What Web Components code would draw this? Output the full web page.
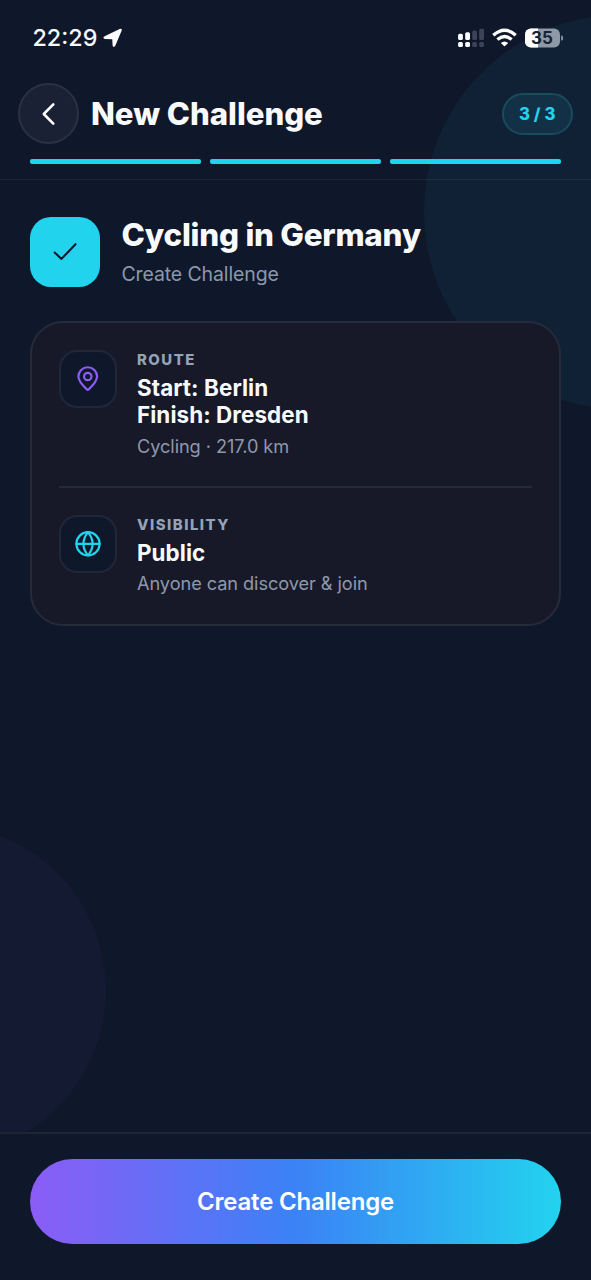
<!DOCTYPE html>
<html lang="en">
<head>
<meta charset="utf-8">
<title>New Challenge</title>
<style>
html,body{margin:0;height:100%;background:#0f172a}
body{font-family:Inter,"Liberation Sans",sans-serif;color:#f8fafc;overflow:hidden}
</style>
</head>
<body>
<challenge-screen>
  <status-bar slot="top"></status-bar>
  <screen-header slot="top" step="3 / 3">New Challenge</screen-header>
  <challenge-hero>
    <span slot="title">Cycling in Germany</span>
    <span slot="sub">Create Challenge</span>
  </challenge-hero>
  <summary-card>
    <summary-row icon="pin">
      <span slot="label">ROUTE</span>
      <span slot="value">Start: Berlin<br>Finish: Dresden</span>
      <span slot="note">Cycling · 217.0 km</span>
    </summary-row>
    <summary-row icon="globe" divided>
      <span slot="label">VISIBILITY</span>
      <span slot="value">Public</span>
      <span slot="note">Anyone can discover &amp; join</span>
    </summary-row>
  </summary-card>
  <gradient-button slot="footer">Create Challenge</gradient-button>
</challenge-screen>
<script>
const define = (name, html) => customElements.define(name, class extends HTMLElement {
  constructor() {
    super();
    this.attachShadow({ mode: "open" }).innerHTML = typeof html === "function" ? html(this) : html;
  }
});

define("challenge-screen", `
<style>
:host{display:flex;flex-direction:column;position:relative;height:1280px;width:591px;overflow:hidden;background:#0f172a;isolation:isolate}
.orb{position:absolute;border-radius:50%;z-index:-1}
.a{left:424px;top:15px;width:394px;height:394px;background:rgba(34,211,238,.06)}
.b{left:-227px;top:824px;width:333px;height:333px;background:#151a33}
main{flex:1;padding:37px 30px 0}
footer{box-sizing:border-box;height:148px;padding:25px 30px 0;border-top:2px solid #1c2536;background:#0f172a}
</style>
<div class="orb a"></div><div class="orb b"></div>
<slot name="top"></slot>
<main><slot></slot></main>
<footer><slot name="footer"></slot></footer>`);

define("status-bar", `
<style>
:host{display:flex;height:75px;flex:none;align-items:center;justify-content:space-between;padding:0 28px 0 32.5px;box-sizing:border-box}
div{display:flex;align-items:center}
.time{font-size:23.3px;font-weight:500;letter-spacing:0;line-height:28px;gap:6px}
svg{display:block}
.bat{position:relative;width:38px;height:20px}
.bat span{position:absolute;left:0;top:0;width:34px;text-align:center;font-size:17px;line-height:20px;font-weight:700;color:#172238}
</style>
<div class="time"><span>22:29</span>
<svg width="20" height="20" viewBox="0 0 20 20"><path d="M1.2 8.6 16.6 1.1Q19.4.1 18.6 2.8L12.4 17.6Q10.7 20.4 9.6 17.4L9.3 11.2 2 10.9Q-.6 10 1.2 8.6Z" fill="#fff"/></svg></div>
<div>
<svg width="27" height="20" viewBox="0 0 27 20" fill="#fff"><rect x=".1" y="5.8" width="4.8" height="6.2" rx="1.6"/><rect x="7.2" y="4.2" width="4.8" height="7.8" rx="1.6"/><rect x=".1" y="14" width="4.8" height="5" rx="1.6"/><rect x="7.2" y="14" width="4.8" height="5" rx="1.6"/><g fill="#3c4357"><rect x="14.2" y="2.5" width="4.8" height="9.5" rx="1.5"/><rect x="21.2" y=".7" width="4.8" height="11.3" rx="1.5"/><rect x="14.2" y="14" width="4.8" height="5" rx="1.5"/><rect x="21.2" y="14" width="4.8" height="5" rx="1.5"/></g></svg>
<svg style="margin:0 8px 0 7px" width="25" height="20" viewBox="0 0 25 20" fill="none" stroke="#fff" stroke-width="3.3"><path d="M1.3 7.3Q12.5-2.9 23.7 7.3"/><path d="M5.4 11.6Q12.5 5.3 19.6 11.6"/><path d="M12.5 18.6 8.8 15Q12.5 11.9 16.2 15Z" fill="#fff" stroke="none"/></svg>
<div class="bat"><svg width="38" height="20" viewBox="0 0 38 20"><defs><clipPath id="c"><rect y=".5" width="35" height="19" rx="6"/></clipPath></defs><g clip-path="url(#c)"><rect width="35" height="20" fill="#8f98a5"/><rect width="13" height="20" fill="#fff"/></g><path d="M36.2 7.2Q38.4 8 38.4 10T36.2 12.8Z" fill="#8f98a5"/></svg><span>35</span></div>
</div>`);

define("screen-header", el => `
<style>
:host{display:block;flex:none;height:105px;box-sizing:border-box;padding-top:8px;border-bottom:1.5px solid rgba(255,255,255,.06)}
.row{display:flex;align-items:center;padding:0 18px;height:61px}
.back{width:61px;height:61px;box-sizing:border-box;border:2px solid #2b3145;border-radius:50%;background:#1b2134;display:grid;place-items:center}
h1{margin:0 0 0 12px;flex:1;font-size:31.2px;font-weight:800;letter-spacing:-.03px;line-height:40px;white-space:nowrap}
.step{box-sizing:border-box;width:71.5px;height:42px;border-radius:21px;border:2px solid #194b5b;background:#123147;color:#22d3ee;font-size:16.7px;font-weight:800;line-height:39px;text-align:center;letter-spacing:.15px}
.bars{display:grid;grid-template-columns:repeat(3,1fr);gap:9px;padding:14.5px 30px 0}
.bars i{height:5px;border-radius:2px;background:#22d3ee}
</style>
<div class="row"><div class="back"><svg width="24" height="24" viewBox="0 0 24 24" fill="none" stroke="#fff" stroke-width="2.6" stroke-linecap="round" stroke-linejoin="round"><path d="M16.3 2.4 6.8 12l9.5 9.6"/></svg></div>
<h1><slot></slot></h1><div class="step">${el.getAttribute("step")}</div></div>
<div class="bars"><i></i><i></i><i></i></div>`);

define("challenge-hero", `
<style>
:host{display:flex;gap:21.5px;height:69.5px}
.tile{width:70px;height:69.5px;border-radius:21px;background:#22d3ee;display:grid;place-items:center}
.t{margin-top:-1px;font-size:31.4px;font-weight:800;letter-spacing:-.24px;line-height:38px;white-space:nowrap}
.s{margin-top:8px;font-size:19.5px;line-height:25px;color:#8d97aa;letter-spacing:-.12px}
</style>
<div class="tile"><svg width="26" height="22" viewBox="0 0 26 22" fill="none" stroke="#0f172a" stroke-width="2.1" stroke-linecap="round" stroke-linejoin="round"><path d="m2.7 11.5 6.8 6.4L23.5 3.2"/></svg></div>
<div><div class="t"><slot name="title"></slot></div><div class="s"><slot name="sub"></slot></div></div>`);

define("summary-card", `
<style>
:host{display:block;box-sizing:border-box;height:305px;margin-top:34.5px;padding:27px;border:2px solid #262b3c;border-radius:33px;background:#171929}
</style><slot></slot>`);

const icons = {
  pin: `<g stroke="#8b5cf6"><path d="M24.1 12.6c0 5.1-4.8 9.4-8.7 13a.9.9 0 0 1-1.3 0c-3.9-3.6-8.7-7.9-8.7-13a9.35 9.35 0 0 1 18.7 0Z"/><circle cx="14.75" cy="12.5" r="3.7"/></g>`,
  globe: `<g stroke="#22d3ee"><circle cx="15" cy="14.8" r="11.6"/><path d="M3.4 14.8h23.2M15 3.2c-6.1 7.2-6.1 16 0 23.2 6.1-7.2 6.1-16 0-23.2Z"/></g>`
};
define("summary-row", el => `
<style>
:host{display:flex;gap:20px;height:109px}
:host([divided]){margin-top:27px;padding-top:27px;border-top:2px solid #262a3b}
.box{flex:none;box-sizing:border-box;width:58px;height:58px;border:2px solid #20273a;border-radius:18px;background:#0f172a;display:grid;place-items:center}
.l{padding-top:1px;font-size:14.9px;font-weight:800;line-height:18px;letter-spacing:1.5px;color:#94a3b8}
.v{margin-top:5px;font-size:22.4px;font-weight:700;line-height:27.4px;letter-spacing:.08px}
.n{margin-top:5px;font-size:18.2px;line-height:24px;color:#8e98ab;letter-spacing:-.08px}
</style>
<div class="box"><svg width="30" height="30" viewBox="0 0 30 30" fill="none" stroke-width="2.2" stroke-linejoin="round" stroke-linecap="round">${icons[el.getAttribute("icon")]}</svg></div>
<div><div class="l"><slot name="label"></slot></div><div class="v"><slot name="value"></slot></div><div class="n"><slot name="note"></slot></div></div>`);

define("gradient-button", `
<style>
:host{display:block}
button{display:block;width:100%;height:85px;padding:0;border:0;border-radius:43px;background:linear-gradient(90deg,#8b5cf6,#3b82f6 50%,#22d3ee);color:#fff;font:600 24px/85px Inter,"Liberation Sans",sans-serif;letter-spacing:-.2px}
</style><button><slot></slot></button>`);
</script>
</body>
</html>
